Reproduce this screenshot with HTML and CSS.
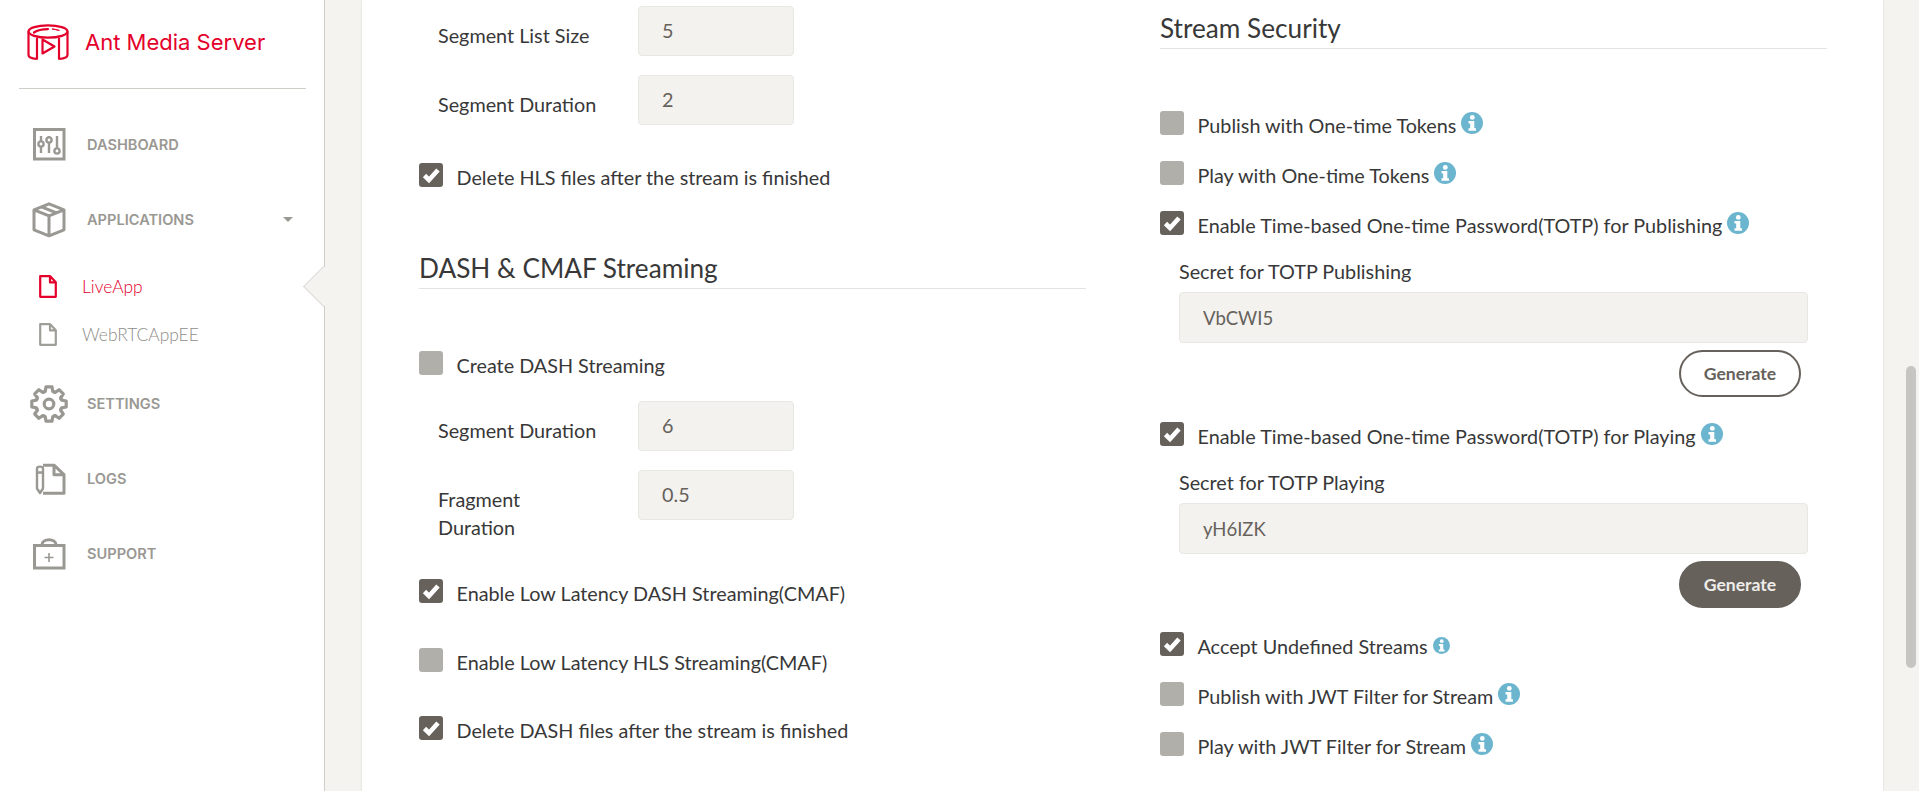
FILE: index.html
```html
<!DOCTYPE html>
<html lang="en">
<head>
  <meta charset="UTF-8">
  <meta name="viewport" content="width=device-width, initial-scale=1.0">
  <title>Ant Media Server</title>
  <link rel="stylesheet" href="styles.css">
</head>
<body>
  <svg width="0" height="0" class="defs">
    <defs>
      <symbol id="tick" viewBox="0 0 24 24">
        <path d="M5.5 12.5l4.5 4.5 9-10" fill="none" stroke="#fff" stroke-width="4.6"/>
      </symbol>
      <symbol id="info" viewBox="0 0 22 22">
        <circle cx="11" cy="11" r="11" fill="#6bb5cf"/>
        <circle cx="11.3" cy="5.4" r="2.4" fill="#fff"/>
        <path d="M7.5 9h5.8v7.2h1.7v2.6H7.5v-2.6h1.7v-4.6H7.5z" fill="#fff"/>
      </symbol>
      <symbol id="doc" viewBox="0 0 18 23">
        <path d="M1.2 1.2h10l5.6 6v14.6H1.2zM11 1.2v6.2h5.8" fill="none" stroke="currentColor" stroke-width="2.2" stroke-linejoin="round"/>
      </symbol>
    </defs>
  </svg>

  <aside class="sidebar">
    <div class="logo">
      <svg class="logo-mark" width="42" height="36" viewBox="0 0 42 36" fill="none" stroke="#e4002b" stroke-width="2.2" stroke-linejoin="round" stroke-linecap="round">
        <ellipse cx="21" cy="7.5" rx="19.5" ry="6.2"/>
        <path d="M7 8.5c3.5-2.5 8-3.4 14-3.4"/>
        <path d="M29 5.6l3 .8M25.5 5l2.4 .4" stroke-width="1.4"/>
        <path d="M1.5 8v23c0 2.5 3 3.5 8.5 3.8V14.5"/>
        <path d="M40.5 8v23c0 2.5-3 3.5-8.5 3.8V14.5"/>
        <path d="M15.5 15.5v14l12-7z"/>
      </svg>
      <span class="logo-text">Ant Media Server</span>
    </div>

    <nav class="nav">
      <div class="nav-item">
        <svg class="nav-icon" width="40" height="36" viewBox="0 0 40 36" fill="none" stroke="currentColor" stroke-width="3">
          <rect x="5.5" y="2.5" width="29.5" height="29.5"/>
          <path d="M12 9v17M20 9v17M28 9v12" stroke-width="2.4"/>
          <circle cx="12" cy="17" r="2.6" fill="#fff" stroke-width="2.4"/>
          <circle cx="20" cy="13" r="2.6" fill="#fff" stroke-width="2.4"/>
          <circle cx="28" cy="24" r="2.6" fill="#fff" stroke-width="2.4"/>
        </svg>
        <span>Dashboard</span>
      </div>
      <div class="nav-item">
        <svg class="nav-icon" width="40" height="36" viewBox="0 0 40 36" fill="none" stroke="currentColor" stroke-width="3" stroke-linejoin="round">
          <path d="M20 1.8l15 6v20l-15 6-15-6v-20zM5 7.8l15 6 15-6M20 13.8v20M12.5 4.8l15 6"/>
        </svg>
        <span>Applications</span>
        <i class="caret"></i>
      </div>
      <div class="sub-list">
        <div class="sub-item active">
          <svg width="18" height="23"><use href="#doc"/></svg>
          <span>LiveApp</span>
          <i class="notch"></i>
        </div>
        <div class="sub-item">
          <svg width="18" height="23"><use href="#doc"/></svg>
          <span>WebRTCAppEE</span>
        </div>
      </div>
      <div class="nav-item">
        <svg class="nav-icon" width="40" height="40" viewBox="-20 -20 40 40" fill="none" stroke="currentColor" stroke-width="3.2" stroke-linejoin="round">
          <defs>
            <path id="gear-tooth" d="M-6-11.6L-3.8-12.6-3-17.2H3L3.8-12.6 6-11.6"/>
          </defs>
          <use href="#gear-tooth"/>
          <use href="#gear-tooth" transform="rotate(45)"/>
          <use href="#gear-tooth" transform="rotate(90)"/>
          <use href="#gear-tooth" transform="rotate(135)"/>
          <use href="#gear-tooth" transform="rotate(180)"/>
          <use href="#gear-tooth" transform="rotate(225)"/>
          <use href="#gear-tooth" transform="rotate(270)"/>
          <use href="#gear-tooth" transform="rotate(315)"/>
          <circle r="4.8"/>
        </svg>
        <span>Settings</span>
      </div>
      <div class="nav-item">
        <svg class="nav-icon" width="40" height="34" viewBox="0 0 40 34" fill="none" stroke="currentColor" stroke-width="3" stroke-linejoin="round">
          <path d="M14 3.2h11l10 9.5v18.5H14M25 3.2v9.5h10"/>
          <path d="M8 6.5c0-2.5 6-2.5 6 0v20l-3 4.5-3-4.5zM8 10.5h6" stroke-width="2.4"/>
        </svg>
        <span>Logs</span>
      </div>
      <div class="nav-item">
        <svg class="nav-icon" width="40" height="32" viewBox="0 0 40 32" fill="none" stroke="currentColor" stroke-width="3">
          <rect x="5.5" y="7.5" width="29.5" height="22.5"/>
          <path d="M13 7c0-7 14-7 14 0"/>
          <path d="M20 15v9M15.5 19.5h9" stroke-width="1.6"/>
        </svg>
        <span>Support</span>
      </div>
    </nav>
  </aside>

  <main class="main">
    <div class="card">
      <section class="col">
        <div class="fields">
          <div class="field">
            <label class="field-label">Segment List Size</label>
            <input class="input input-small" value="5" readonly>
          </div>
          <div class="field">
            <label class="field-label">Segment Duration</label>
            <input class="input input-small" value="2" readonly>
          </div>
        </div>
        <div class="check"><span class="box on"><svg width="24" height="24"><use href="#tick"/></svg></span><span>Delete HLS files after the stream is finished</span></div>

        <h3 class="title title-dash">DASH &amp; CMAF Streaming</h3>

        <div class="check"><span class="box"></span><span>Create DASH Streaming</span></div>
        <div class="fields">
          <div class="field">
            <label class="field-label">Segment Duration</label>
            <input class="input input-small" value="6" readonly>
          </div>
          <div class="field">
            <label class="field-label">Fragment<br>Duration</label>
            <input class="input input-small" value="0.5" readonly>
          </div>
        </div>
        <div class="check tall"><span class="box on"><svg width="24" height="24"><use href="#tick"/></svg></span><span>Enable Low Latency DASH Streaming(CMAF)</span></div>
        <div class="check tall"><span class="box"></span><span>Enable Low Latency HLS Streaming(CMAF)</span></div>
        <div class="check tall"><span class="box on"><svg width="24" height="24"><use href="#tick"/></svg></span><span>Delete DASH files after the stream is finished</span></div>
      </section>

      <section class="col">
        <h3 class="title title-security">Stream Security</h3>

        <div class="check"><span class="box"></span><span>Publish with One-time Tokens</span><svg class="info" width="22" height="22"><use href="#info"/></svg></div>
        <div class="check"><span class="box"></span><span>Play with One-time Tokens</span><svg class="info" width="22" height="22"><use href="#info"/></svg></div>

        <div class="check short"><span class="box on"><svg width="24" height="24"><use href="#tick"/></svg></span><span>Enable Time-based One-time Password(TOTP) for Publishing</span><svg class="info" width="22" height="22"><use href="#info"/></svg></div>
        <div class="secret">
          <label class="secret-label">Secret for TOTP Publishing</label>
          <input class="input input-wide" value="VbCWI5" readonly>
          <div class="secret-actions"><button class="btn" type="button">Generate</button></div>
        </div>

        <div class="check short"><span class="box on"><svg width="24" height="24"><use href="#tick"/></svg></span><span>Enable Time-based One-time Password(TOTP) for Playing</span><svg class="info" width="22" height="22"><use href="#info"/></svg></div>
        <div class="secret">
          <label class="secret-label">Secret for TOTP Playing</label>
          <input class="input input-wide" value="yH6IZK" readonly>
          <div class="secret-actions"><button class="btn btn-filled" type="button">Generate</button></div>
        </div>

        <div class="check"><span class="box on"><svg width="24" height="24"><use href="#tick"/></svg></span><span>Accept Undefined Streams</span><svg class="info info-small" width="17" height="17"><use href="#info"/></svg></div>
        <div class="check"><span class="box"></span><span>Publish with JWT Filter for Stream</span><svg class="info" width="22" height="22"><use href="#info"/></svg></div>
        <div class="check"><span class="box"></span><span>Play with JWT Filter for Stream</span><svg class="info" width="22" height="22"><use href="#info"/></svg></div>
      </section>
    </div>
  </main>

  <div class="scroll-thumb"></div>
</body>
</html>
```

FILE: styles.css
```css
html, body {
  height: 100%;
  margin: 0;
  overflow: hidden;
}
body {
  display: flex;
  font-family: Lato, "Liberation Sans", sans-serif;
  font-size: 19.8px;
  color: #383838;
  background-color: #f4f3ef;
}
.defs {
  position: absolute;
}

/* sidebar */
.sidebar {
  flex: 0 0 325px;
  box-sizing: border-box;
  height: 100%;
  padding-left: 19px;
  padding-right: 18px;
  background-color: #fff;
  border-right: 1px solid #cfcec9;
}
.logo {
  display: flex;
  align-items: center;
  box-sizing: border-box;
  height: 89px;
  padding: 0 0 4px 8px;
  border-bottom: 1px solid #cfcec9;
}
.logo-text {
  margin-left: 16px;
  font-family: Inter, sans-serif;
  font-size: 22px;
  color: #e4002b;
}
.nav {
  padding-top: 18px;
}
.nav-item {
  display: flex;
  align-items: center;
  height: 75px;
  color: #9a9893;
  font-family: Inter, sans-serif;
  font-size: 14.6px;
  font-weight: 600;
  text-transform: uppercase;
}
.nav-icon {
  flex: 0 0 40px;
  margin-left: 10px;
  margin-right: 18px;
}
.caret {
  margin-left: auto;
  margin-right: 13px;
  border-left: 5px solid transparent;
  border-right: 5px solid transparent;
  border-top: 5px solid #9a9893;
}
.sub-list {
  margin: 5px 0 8px;
}
.sub-item {
  position: relative;
  display: flex;
  align-items: center;
  height: 48px;
  padding-left: 20px;
  color: #8f8d88;
  font-size: 17.4px;
  font-weight: 300;
}
.sub-item span {
  margin-left: 25px;
}
.sub-item svg {
  color: #a09e99;
}
.sub-item.active,
.sub-item.active svg {
  color: #e4002b;
}
.notch {
  position: absolute;
  right: -32px;
  top: 10px;
  width: 28px;
  height: 28px;
  background-color: #f4f3ef;
  border-left: 1px solid #dcdbd7;
  border-bottom: 1px solid #dcdbd7;
  transform: rotate(45deg);
}

/* content */
.main {
  flex: 1;
  padding: 0 36px 0 37px;
}
.card {
  display: flex;
  gap: 74px;
  height: 100%;
  padding: 0 56px 0 57px;
  background-color: #fff;
  box-shadow: 0 0 2px rgba(0, 0, 0, 0.12);
  box-sizing: border-box;
}
.col {
  flex: 1;
  min-width: 0;
  padding-top: 6px;
}
.title {
  height: 36px;
  margin: 0 0 62px;
  padding-bottom: 2px;
  font-size: 26.2px;
  font-weight: 400;
  line-height: 36px;
  color: #383838;
  border-bottom: 1px solid #e3e3e3;
}
.title-dash {
  margin-top: 37px;
}
.title-security {
  margin-top: 4px;
}
.fields {
  padding-bottom: 19px;
}
.field {
  display: flex;
  align-items: flex-start;
  margin-bottom: 19px;
}
.field-label {
  flex: 0 0 219px;
  box-sizing: border-box;
  padding: 15px 0 0 19px;
  line-height: 28px;
}
.input {
  box-sizing: border-box;
  padding: 0 23px;
  font-family: inherit;
  font-size: 19.8px;
  color: #66615b;
  background-color: #f3f2ee;
  border: 1px solid #e8e7e3;
  border-radius: 4px;
  outline: none;
}
.input-small {
  width: 156px;
  height: 50px;
  padding-bottom: 2px;
}
.input-wide {
  display: block;
  width: 629px;
  height: 51px;
  font-size: 18.5px;
}

.check {
  display: flex;
  align-items: flex-start;
  height: 50px;
  line-height: 28px;
}
.check.tall {
  height: 68.5px;
}
.check.short {
  height: 47px;
}
.box {
  flex: 0 0 24px;
  height: 24px;
  margin-right: 13.5px;
  background-color: #b1afaa;
  border-radius: 3px;
}
.box.on {
  background-color: #67615b;
}
.box svg {
  display: block;
}
.info {
  flex: 0 0 22px;
  margin: 1px 0 0 5px;
}
.info-small {
  flex: 0 0 17px;
  margin-top: 5px;
}

.secret {
  padding-left: 19px;
  margin-bottom: 25px;
}
.secret + .check + .secret {
  margin-bottom: 24px;
}
.secret-label {
  display: block;
  margin: -1px 0 7px;
  line-height: 28px;
}
.secret-actions {
  display: flex;
  justify-content: flex-end;
  margin-top: 7px;
  padding-right: 26px;
}
.btn {
  box-sizing: border-box;
  width: 122px;
  height: 47px;
  padding: 0;
  font-family: inherit;
  font-size: 17.6px;
  font-weight: 700;
  color: #66615b;
  background-color: #fff;
  border: 2px solid #67615b;
  border-radius: 24px;
}
.btn-filled {
  color: #eeede9;
  background-color: #67615b;
}

.scroll-thumb {
  position: absolute;
  left: 1906px;
  top: 366px;
  width: 10px;
  height: 302px;
  background-color: #c6c5c2;
  border-radius: 5px;
}
```
